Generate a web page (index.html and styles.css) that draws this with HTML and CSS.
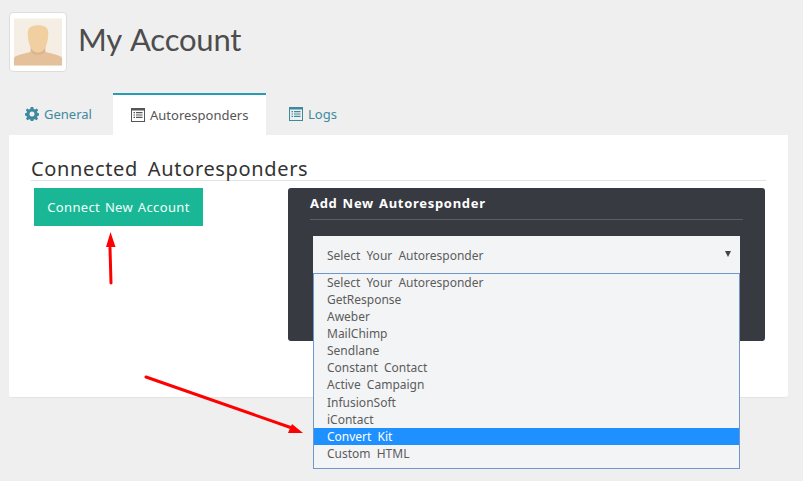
FILE: index.html
```html
<!DOCTYPE html>
<html lang="en">
<head>
<meta charset="utf-8">
<title>My Account</title>
<link rel="stylesheet" href="styles.css">
</head>
<body>
<header class="page-head">
  <div class="avatar">
    <svg width="49" height="48" viewBox="0 0 49 48">
      <rect width="49" height="48" fill="#f5eee5"/>
      <path d="M0 48V40C3 37 11 36 17 34C20 36 29 36 32 34C38 36 46 37 49 40V48Z" fill="#e5c19b"/>
      <path d="M17 34C20 38 29 38 32 34V28H17Z" fill="#dcb48c"/>
      <path d="M14 15C14 9 18 7 24.500 7C31 7 35 9 35 15C35 24 32 35 24.500 35C17 35 14 24 14 15Z" fill="#f2cfa1"/>
    </svg>
  </div>
  <h1 class="title">My Account</h1>
</header>
<nav class="tabs">
  <a class="tab tab-general">
    <svg class="ico" width="14" height="14" viewBox="0 0 14 14"><path fill-rule="evenodd" d="M5.700 0H8.300L8.700 2 10 2.500 11.700 1.400 13.200 3 12 4.700 12.500 6 14 6.300V8.500L12.500 8.900 12 10.100 13 11.800 11.500 13.200 9.900 12.200 8.700 12.600 8.300 14H5.700L5.300 12.600 4.100 12.200 2.500 13.200 1 11.800 2 10.100 1.500 8.900 0 8.500V6.300L1.500 6 2 4.700.8 3 2.300 1.400 4 2.500 5.300 2ZM7 4.600A2.500 2.500 0 1 0 7 9.600 2.500 2.500 0 1 0 7 4.600Z"/></svg>
    General
  </a>
  <a class="tab tab-active">
    <svg class="ico" width="14" height="14" viewBox="0 0 14 14"><path fill-rule="evenodd" d="M0 0H14V14H0ZM1 2.500V13H13V2.500ZM2.500 4H4V5.200H2.500ZM5 4H11.500V5.200H5ZM2.500 6.400H4V7.600H2.500ZM5 6.400H11.500V7.600H5ZM2.500 8.800H4V10H2.500ZM5 8.800H11.500V10H5Z"/></svg>
    Autoresponders
  </a>
  <a class="tab tab-logs">
    <svg class="ico" width="14" height="14" viewBox="0 0 14 14"><path fill-rule="evenodd" d="M0 0H14V14H0ZM1 2.500V13H13V2.500ZM2.500 4H4V5.200H2.500ZM5 4H11.500V5.200H5ZM2.500 6.400H4V7.600H2.500ZM5 6.400H11.500V7.600H5ZM2.500 8.800H4V10H2.500ZM5 8.800H11.500V10H5Z"/></svg>
    Logs
  </a>
</nav>
<main class="panel">
  <h2 class="section-title">Connected Autoresponders</h2>
  <div class="columns">
    <div class="left-col"><button class="connect-btn">Connect New Account</button></div>
    <section class="dark-card">
      <h3 class="card-title">Add New Autoresponder</h3>
      <div class="select-wrap">
        <div class="select-box">Select Your Autoresponder<span class="caret"></span></div>
        <ul class="options">
          <li>Select Your Autoresponder</li>
          <li>GetResponse</li>
          <li>Aweber</li>
          <li>MailChimp</li>
          <li>Sendlane</li>
          <li>Constant Contact</li>
          <li>Active Campaign</li>
          <li>InfusionSoft</li>
          <li>iContact</li>
          <li class="selected">Convert Kit</li>
          <li>Custom HTML</li>
        </ul>
      </div>
    </section>
  </div>
</main>
<svg class="arrows" width="803" height="481" viewBox="0 0 803 481">
  <path d="M111 283 110 248" stroke="#f00" stroke-width="3" stroke-linecap="round" fill="none"/>
  <path d="M110.500 232 115.500 247 106 247Z" fill="#f00"/>
  <path d="M146 377 292 428" stroke="#f00" stroke-width="3" stroke-linecap="round" fill="none"/>
  <path d="M303 433 288 433 292 424Z" fill="#f00"/>
</svg>
</body>
</html>
```
FILE: styles.css
```css
* { box-sizing: border-box; }
html, body { margin: 0; padding: 0; }
body {
  position: relative;
  width: 803px;
  height: 481px;
  overflow: hidden;
  background: #efefef;
  font-family: "Noto Sans", "Open Sans", sans-serif;
  color: #555;
}
.page-head {
  display: flex;
  align-items: center;
  height: 93px;
  padding: 12px 0 21px 9px;
}
.avatar {
  width: 58px;
  height: 60px;
  padding: 5px 4px;
  background: #fff;
  border: 1px solid #ddd;
  border-radius: 4px;
  display: flex;
}
.title {
  margin: 0 0 6px 11px;
  font-family: Lato, "Noto Sans", sans-serif;
  font-size: 31px;
  font-weight: 400;
  line-height: 40px;
  letter-spacing: -0.2px;
  word-spacing: 2px;
  color: #4d4d4d;
}
.tabs {
  display: flex;
  height: 42px;
  padding-left: 9px;
}
.tab {
  display: flex;
  align-items: center;
  gap: 5px;
  font-size: 13px;
  color: #3d8a9e;
}
.tab-general { width: 104px; padding-left: 16px; }
.tab-active {
  width: 153px;
  padding-left: 18px;
  background: #fff;
  border-top: 2px solid #2a9bb5;
  color: #555;
}
.tab-logs { padding-left: 23px; }
.ico { fill: currentColor; flex: none; }
.panel {
  width: 779px;
  height: 263px;
  margin-left: 9px;
  padding: 22px 22px 0;
  background: #fff;
  border-bottom: 1px solid #e4e4e4;
  border-radius: 0 0 3px 3px;
}
.section-title {
  margin: 0;
  height: 24px;
  font-size: 20px;
  font-weight: 400;
  line-height: 24px;
  letter-spacing: 0.65px;
  word-spacing: 4px;
  color: #333;
  border-bottom: 1px solid #e3e3e3;
}
.columns {
  display: flex;
  margin-top: 7px;
}
.left-col { width: 257px; padding-left: 3px; }
.connect-btn {
  display: block;
  width: 169px;
  height: 38px;
  padding: 0;
  border: 0;
  background: #1ab797;
  color: #f2fffb;
  font: 400 13px "Noto Sans", sans-serif;
  letter-spacing: 0.35px;
  word-spacing: 1px;
}
.dark-card {
  width: 477px;
  height: 153px;
  padding: 0 22px;
  background: #373a41;
  border-radius: 3px;
}
.card-title {
  margin: 0;
  height: 32px;
  font-size: 13px;
  font-weight: 700;
  line-height: 30px;
  letter-spacing: 0.7px;
  word-spacing: 1px;
  color: #fff;
  border-bottom: 1px solid #5c5e63;
}
.select-wrap {
  position: relative;
  width: 427px;
  margin: 16px 0 0 3px;
}
.select-box {
  position: relative;
  height: 37px;
  padding-left: 14px;
  background: #f3f4f6;
  font-size: 12px;
  line-height: 39px;
  word-spacing: 3px;
  color: #5c5c5c;
}
.caret {
  position: absolute;
  top: 15px;
  right: 9px;
  border: 3px solid transparent;
  border-top: 6px solid #444;
  border-bottom: 0;
}
.options {
  position: absolute;
  top: 37px;
  left: 0;
  width: 427px;
  height: 196px;
  margin: 0;
  padding: 0;
  list-style: none;
  background: #f3f4f6;
  border: 1px solid #7096cc;
  font-size: 12px;
  word-spacing: 3px;
  color: #5c5c5c;
}
.options li {
  height: 17.09px;
  padding-left: 13px;
  line-height: 17.09px;
}
.options .selected { background: #1e90ff; color: #fff; }
.arrows { position: absolute; top: 0; left: 0; pointer-events: none; }
```
